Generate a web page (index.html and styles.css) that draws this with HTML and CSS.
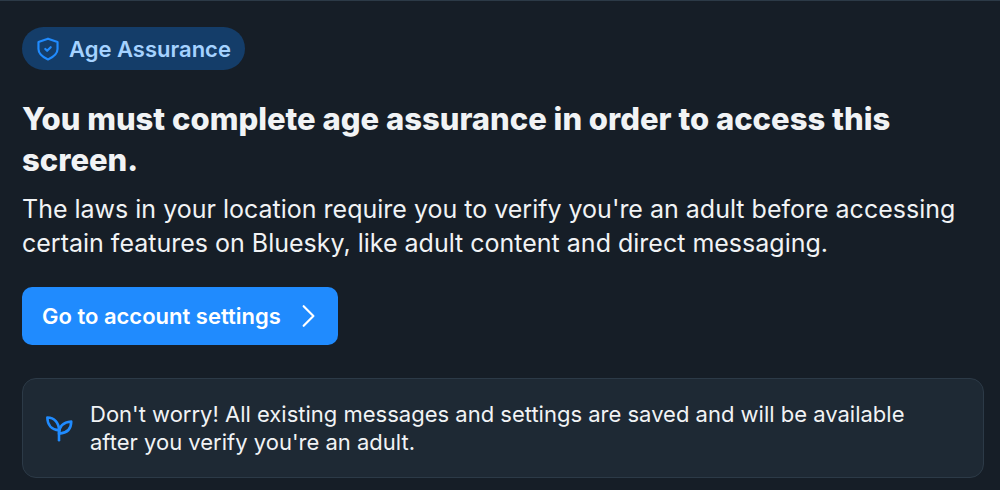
FILE: index.html
```
<!DOCTYPE html>
<html lang="en">
<head>
    <meta charset="UTF-8">
    <meta name="viewport" content="width=device-width, initial-scale=1.0">
    <title>Age Assurance</title>
    <link rel="stylesheet" href="styles.css">
</head>
<body>
    <main class="screen">
        <div class="badge">
            <svg class="badge-icon" viewBox="0 0 24 24" fill="none" stroke="currentColor" stroke-width="2" stroke-linejoin="round" stroke-linecap="round" aria-hidden="true">
                <path d="M12 2.500l8.800 3v6.500c0 4.600-3.800 7.400-8.800 9.700-5-2.300-8.800-5.100-8.800-9.700V5.500z"/>
                <path d="M9.500 12l1.700 1.700 3.300-3.400"/>
            </svg>
            <span>Age Assurance</span>
        </div>

        <h1 class="title">You must complete age assurance in order to access this screen.</h1>
        <p class="description">The laws in your location require you to verify you're an adult before accessing certain features on Bluesky, like adult content and direct messaging.</p>

        <button type="button" class="settings-button">
            <span>Go to account settings</span>
            <svg class="chevron" viewBox="0 0 24 24" fill="none" stroke="currentColor" stroke-width="2" stroke-linecap="round" stroke-linejoin="round" aria-hidden="true">
                <path d="M8 3l9 9-9 9"/>
            </svg>
        </button>

        <div class="notice">
            <svg class="notice-icon" viewBox="0 0 24 24" fill="none" stroke="currentColor" stroke-width="2.200" stroke-linejoin="round" stroke-linecap="round" aria-hidden="true">
                <path d="M12 14C5.500 13.500 2 9 2 3c6 0 10 4.500 10 11z"/>
                <path d="M12 17C12 10.500 16 7 22.500 6.500 22.500 13 18.500 16.500 12 17z"/>
                <path d="M12 14v8.500"/>
            </svg>
            <p class="notice-text">Don't worry! All existing messages and settings are saved and will be available after you verify you're an adult.</p>
        </div>
    </main>
</body>
</html>
```
FILE: styles.css
```
* {
    box-sizing: border-box;
}

body {
    margin: 0;
    font-family: Inter, sans-serif;
    background-color: #161e27;
    color: #f1f3f5;
}

.screen {
    display: flex;
    flex-direction: column;
    align-items: flex-start;
    padding: 26px 16px 12px 22px;
    border-top: 1px solid #2c3a47;
}

/* Pill above the title */
.badge {
    display: flex;
    align-items: center;
    gap: 8px;
    height: 43px;
    padding: 0 14px 0 13px;
    border-radius: 22px;
    background-color: #143d69;
    color: #a5d2ff;
    font-size: 22px;
    font-weight: 600;
}

.badge-icon {
    width: 26px;
    height: 26px;
    color: #208bfe;
}

.title {
    margin: 28px 0 0;
    font-size: 31px;
    line-height: 41px;
    font-weight: 800;
}

.description {
    margin: 12px 0 0;
    font-size: 25px;
    line-height: 34px;
}

.settings-button {
    display: flex;
    align-items: center;
    gap: 14px;
    height: 58px;
    margin: 27px 0 0;
    padding: 0 17px 0 20px;
    border: none;
    border-radius: 10px;
    background-color: #208bfe;
    color: #fff;
    font-family: inherit;
    font-size: 22px;
    font-weight: 600;
    cursor: pointer;
}

.chevron {
    width: 26px;
    height: 26px;
}

.notice {
    display: flex;
    align-items: center;
    gap: 17px;
    width: 100%;
    margin-top: 33px;
    padding: 21px 34px 21px 22px;
    border: 1px solid #2c3a47;
    border-radius: 14px;
    background-color: #1e2934;
}

.notice-icon {
    flex: none;
    width: 28px;
    height: 28px;
    color: #208bfe;
}

.notice-text {
    margin: 0;
    font-size: 22px;
    line-height: 28px;
}
```
